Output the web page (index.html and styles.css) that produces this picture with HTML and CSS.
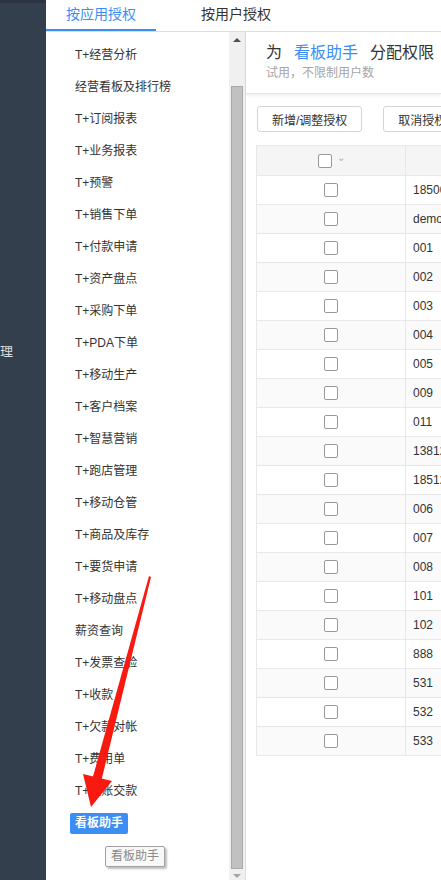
FILE: index.html
```html
<!doctype html>
<html lang="zh-CN">
  <head>
    <meta charset="UTF-8" />
    <meta name="viewport" content="width=device-width, initial-scale=1.0" />
    <title>按应用授权</title>
    <link rel="stylesheet" href="styles.css">
  </head>
  <body>
    <div class="sidebar">
      <span class="sidebar-label">理</span>
    </div>
    <div class="main">
      <div class="tabs">
        <div class="tab active">按应用授权</div>
        <div class="tab">按用户授权</div>
      </div>
      <div class="body">
        <ul class="app-list">
          <li>T+经营分析</li>
          <li>经营看板及排行榜</li>
          <li>T+订阅报表</li>
          <li>T+业务报表</li>
          <li>T+预警</li>
          <li>T+销售下单</li>
          <li>T+付款申请</li>
          <li>T+资产盘点</li>
          <li>T+采购下单</li>
          <li>T+PDA下单</li>
          <li>T+移动生产</li>
          <li>T+客户档案</li>
          <li>T+智慧营销</li>
          <li>T+跑店管理</li>
          <li>T+移动仓管</li>
          <li>T+商品及库存</li>
          <li>T+要货申请</li>
          <li>T+移动盘点</li>
          <li>薪资查询</li>
          <li>T+发票查验</li>
          <li>T+收款</li>
          <li>T+欠款对帐</li>
          <li>T+费用单</li>
          <li>T+交账交款</li>
          <li><span class="selected">看板助手</span></li>
        </ul>
        <div class="scrollbar">
          <div class="arrow-up"></div>
          <div class="thumb"></div>
          <div class="arrow-down"></div>
        </div>
        <div class="detail">
          <div class="detail-head">
            <p class="title">为<span class="app-name">看板助手</span>分配权限</p>
            <p class="subtitle">试用，不限制用户数</p>
          </div>
          <div class="toolbar">
            <button class="btn">新增/调整授权</button>
            <button class="btn">取消授权</button>
          </div>
          <table class="user-table">
            <thead>
              <tr>
                <th class="col-check"><span class="checkbox"></span><span class="chevron">&#8964;</span></th>
                <th class="col-user"></th>
              </tr>
            </thead>
            <tbody>
              <tr><td class="col-check"><span class="checkbox"></span></td><td>18500000001</td></tr>
              <tr><td class="col-check"><span class="checkbox"></span></td><td>demo</td></tr>
              <tr><td class="col-check"><span class="checkbox"></span></td><td>001</td></tr>
              <tr><td class="col-check"><span class="checkbox"></span></td><td>002</td></tr>
              <tr><td class="col-check"><span class="checkbox"></span></td><td>003</td></tr>
              <tr><td class="col-check"><span class="checkbox"></span></td><td>004</td></tr>
              <tr><td class="col-check"><span class="checkbox"></span></td><td>005</td></tr>
              <tr><td class="col-check"><span class="checkbox"></span></td><td>009</td></tr>
              <tr><td class="col-check"><span class="checkbox"></span></td><td>011</td></tr>
              <tr><td class="col-check"><span class="checkbox"></span></td><td>13812345678</td></tr>
              <tr><td class="col-check"><span class="checkbox"></span></td><td>18512345678</td></tr>
              <tr><td class="col-check"><span class="checkbox"></span></td><td>006</td></tr>
              <tr><td class="col-check"><span class="checkbox"></span></td><td>007</td></tr>
              <tr><td class="col-check"><span class="checkbox"></span></td><td>008</td></tr>
              <tr><td class="col-check"><span class="checkbox"></span></td><td>101</td></tr>
              <tr><td class="col-check"><span class="checkbox"></span></td><td>102</td></tr>
              <tr><td class="col-check"><span class="checkbox"></span></td><td>888</td></tr>
              <tr><td class="col-check"><span class="checkbox"></span></td><td>531</td></tr>
              <tr><td class="col-check"><span class="checkbox"></span></td><td>532</td></tr>
              <tr><td class="col-check"><span class="checkbox"></span></td><td>533</td></tr>
            </tbody>
          </table>
        </div>
      </div>
    </div>

    <!-- tooltip and hand-drawn arrow lie over the list -->
    <div class="tooltip">看板助手</div>
    <svg class="pointer" width="441" height="880" viewBox="0 0 441 880">
      <polygon points="149,576 151,577 101,782 92,780" fill="#f81a10" />
      <polygon points="83,774 112,781 91,807" fill="#f81a10" />
    </svg>
  </body>
</html>
```

FILE: styles.css
```css
* {
  margin: 0;
  padding: 0;
  box-sizing: border-box;
  font-family: "Liberation Sans", "Noto Sans CJK SC", sans-serif;
}
body {
  display: flex;
  width: 441px;
  height: 880px;
  overflow: hidden;
  background-color: #fff;
  color: #333;
}
.sidebar {
  width: 46px;
  flex-shrink: 0;
  background-color: #343f4d;
  border-top: 3px solid #2b3440;
  padding-top: 340px;
}
.sidebar-label {
  display: block;
  color: #d8dde4;
  font-size: 13px;
  line-height: 18px;
}
.main {
  flex: 1;
  display: flex;
  flex-direction: column;
  min-width: 0;
}
.tabs {
  height: 32px;
  display: flex;
  gap: 25px;
  border-bottom: 1px solid #ddd;
}
.tab {
  padding: 0 20px;
  height: 31px;
  line-height: 29px;
  font-size: 14px;
  color: #333;
}
.tab.active {
  color: #3a8ef5;
  border-bottom: 2px solid #3a8ef5;
}
.body {
  flex: 1;
  display: flex;
  min-height: 0;
}
.app-list {
  width: 183px;
  flex-shrink: 0;
  list-style: none;
  padding: 7px 0 0 29px;
}
.app-list li {
  height: 32px;
  line-height: 32px;
  font-size: 12px;
  color: #333;
  white-space: nowrap;
}
.app-list .selected {
  display: inline-block;
  margin-left: -5px;
  padding: 0 5px;
  height: 21px;
  line-height: 21px;
  font-size: 12px;
  font-weight: bold;
  color: #fff;
  background-color: #3c8df4;
  border-radius: 2px;
}
.scrollbar {
  width: 17px;
  flex-shrink: 0;
  background-color: #f0f0f0;
  border-right: 1px solid #ddd;
  display: flex;
  flex-direction: column;
  align-items: center;
  padding: 6px 0 2px;
}
.arrow-up,
.arrow-down {
  width: 0;
  height: 0;
  border-left: 4px solid transparent;
  border-right: 4px solid transparent;
}
.arrow-up {
  border-bottom: 4px solid #505050;
}
.arrow-down {
  border-top: 4px solid #a3a3a3;
  margin-top: 5px;
}
.thumb {
  width: 12px;
  flex: 1;
  margin-top: 44px;
  background-color: #c1c1c1;
  border: 1px solid #a9a9a9;
}
.detail {
  flex: 1;
  min-width: 0;
  white-space: nowrap;
}
.detail-head {
  height: 62px;
  padding: 10px 0 0 20px;
  border-bottom: 1px solid #e4e4e4;
  box-shadow: 0 2px 3px rgba(0, 0, 0, 0.06);
}
.title {
  font-size: 16px;
  line-height: 22px;
  color: #333;
}
.app-name {
  color: #3a8ef5;
  margin: 0 12px 0 12px;
}
.subtitle {
  font-size: 12px;
  line-height: 18px;
  color: #a5a5a5;
}
.toolbar {
  display: flex;
  gap: 21px;
  padding: 12px 0 0 11px;
}
.btn {
  height: 26px;
  padding: 0 14px;
  font-size: 12px;
  color: #333;
  background-color: #fff;
  border: 1px solid #d4d4d4;
  border-radius: 3px;
  flex-shrink: 0;
}
.user-table {
  margin: 13px 0 0 10px;
  border-collapse: collapse;
  font-size: 12px;
  width: 300px;
}
.user-table th,
.user-table td {
  border: 1px solid #e8e8e8;
  text-align: left;
  padding: 0 7px;
  color: #333;
}
.user-table th {
  height: 30px;
  background-color: #f5f5f5;
  font-weight: normal;
}
.user-table td {
  height: 29px;
}
.user-table tbody tr:nth-child(even) td {
  background-color: #fafafa;
}
.user-table .col-check {
  width: 149px;
  text-align: center;
}
.checkbox {
  display: inline-block;
  width: 14px;
  height: 14px;
  border: 1px solid #999;
  border-radius: 2px;
  background-color: #fff;
  vertical-align: middle;
}
.chevron {
  display: inline-block;
  margin-left: 5px;
  font-size: 10px;
  color: #aaa;
  vertical-align: middle;
  position: relative;
  top: -3px;
}
.tooltip {
  position: absolute;
  left: 105px;
  top: 846px;
  height: 21px;
  padding: 0 5px;
  line-height: 19px;
  font-size: 12px;
  color: #8a8a8a;
  background-color: #f8f8f8;
  border: 1px solid #a0a0a0;
  border-radius: 2px;
  box-shadow: 2px 2px 2px rgba(0, 0, 0, 0.25);
}
.pointer {
  position: absolute;
  left: 0;
  top: 0;
  pointer-events: none;
}
```
